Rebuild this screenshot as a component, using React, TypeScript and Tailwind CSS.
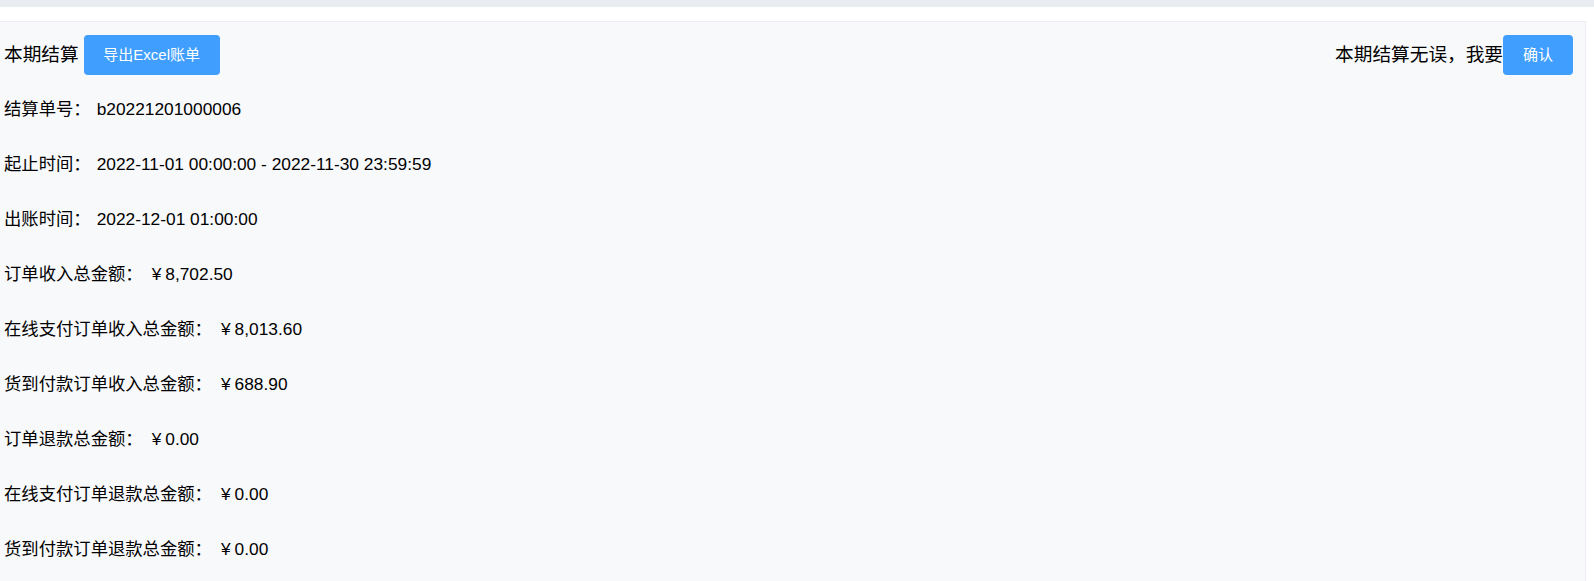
const rows: { label: string; value: string; money?: boolean }[] = [
  { label: '结算单号：', value: 'b20221201000006' },
  { label: '起止时间：', value: '2022-11-01 00:00:00 - 2022-11-30 23:59:59' },
  { label: '出账时间：', value: '2022-12-01 01:00:00' },
  { label: '订单收入总金额：', value: '8,702.50', money: true },
  { label: '在线支付订单收入总金额：', value: '8,013.60', money: true },
  { label: '货到付款订单收入总金额：', value: '688.90', money: true },
  { label: '订单退款总金额：', value: '0.00', money: true },
  { label: '在线支付订单退款总金额：', value: '0.00', money: true },
  { label: '货到付款订单退款总金额：', value: '0.00', money: true },
]

const font = { fontFamily: '"Liberation Sans", "Noto Sans CJK SC", sans-serif' }

export default function App() {
  return (
    <div className="min-h-[581px] bg-white text-black" style={font}>
      <div className="h-[7px] bg-[#e9edf1]" />
      <div className="h-[14px] bg-white" />
      <div className="mr-[8px] border border-l-0 border-[#eceef3] bg-[#f8f9fb] pb-4 pl-[4px] pr-[12px] pt-[13px]">
        {/* header */}
        <div className="flex h-10 items-center justify-between">
          <div className="flex items-center">
            <span className="text-[18.67px]">本期结算</span>
            <button className="ml-[5px] h-10 w-[136px] rounded bg-[#409eff] text-[15px] text-white">导出Excel账单</button>
          </div>
          <div className="flex items-center">
            <span className="text-[18.67px]">本期结算无误，我要</span>
            <button className="h-10 w-[70px] rounded bg-[#409eff] text-[15px] text-white">确认</button>
          </div>
        </div>

        {/* details */}
        <div className="mt-[7px]">
          {rows.map((r) => (
            <div key={r.label} className="flex h-[55px] items-center text-[17.33px]">
              <span>{r.label}</span>
              {r.money ? (
                <span className="ml-[9px] flex items-center">
                  <span className="mr-[4px]">¥</span>
                  {r.value}
                </span>
              ) : (
                <span className="ml-[6px]">{r.value}</span>
              )}
            </div>
          ))}
        </div>
      </div>
    </div>
  )
}
